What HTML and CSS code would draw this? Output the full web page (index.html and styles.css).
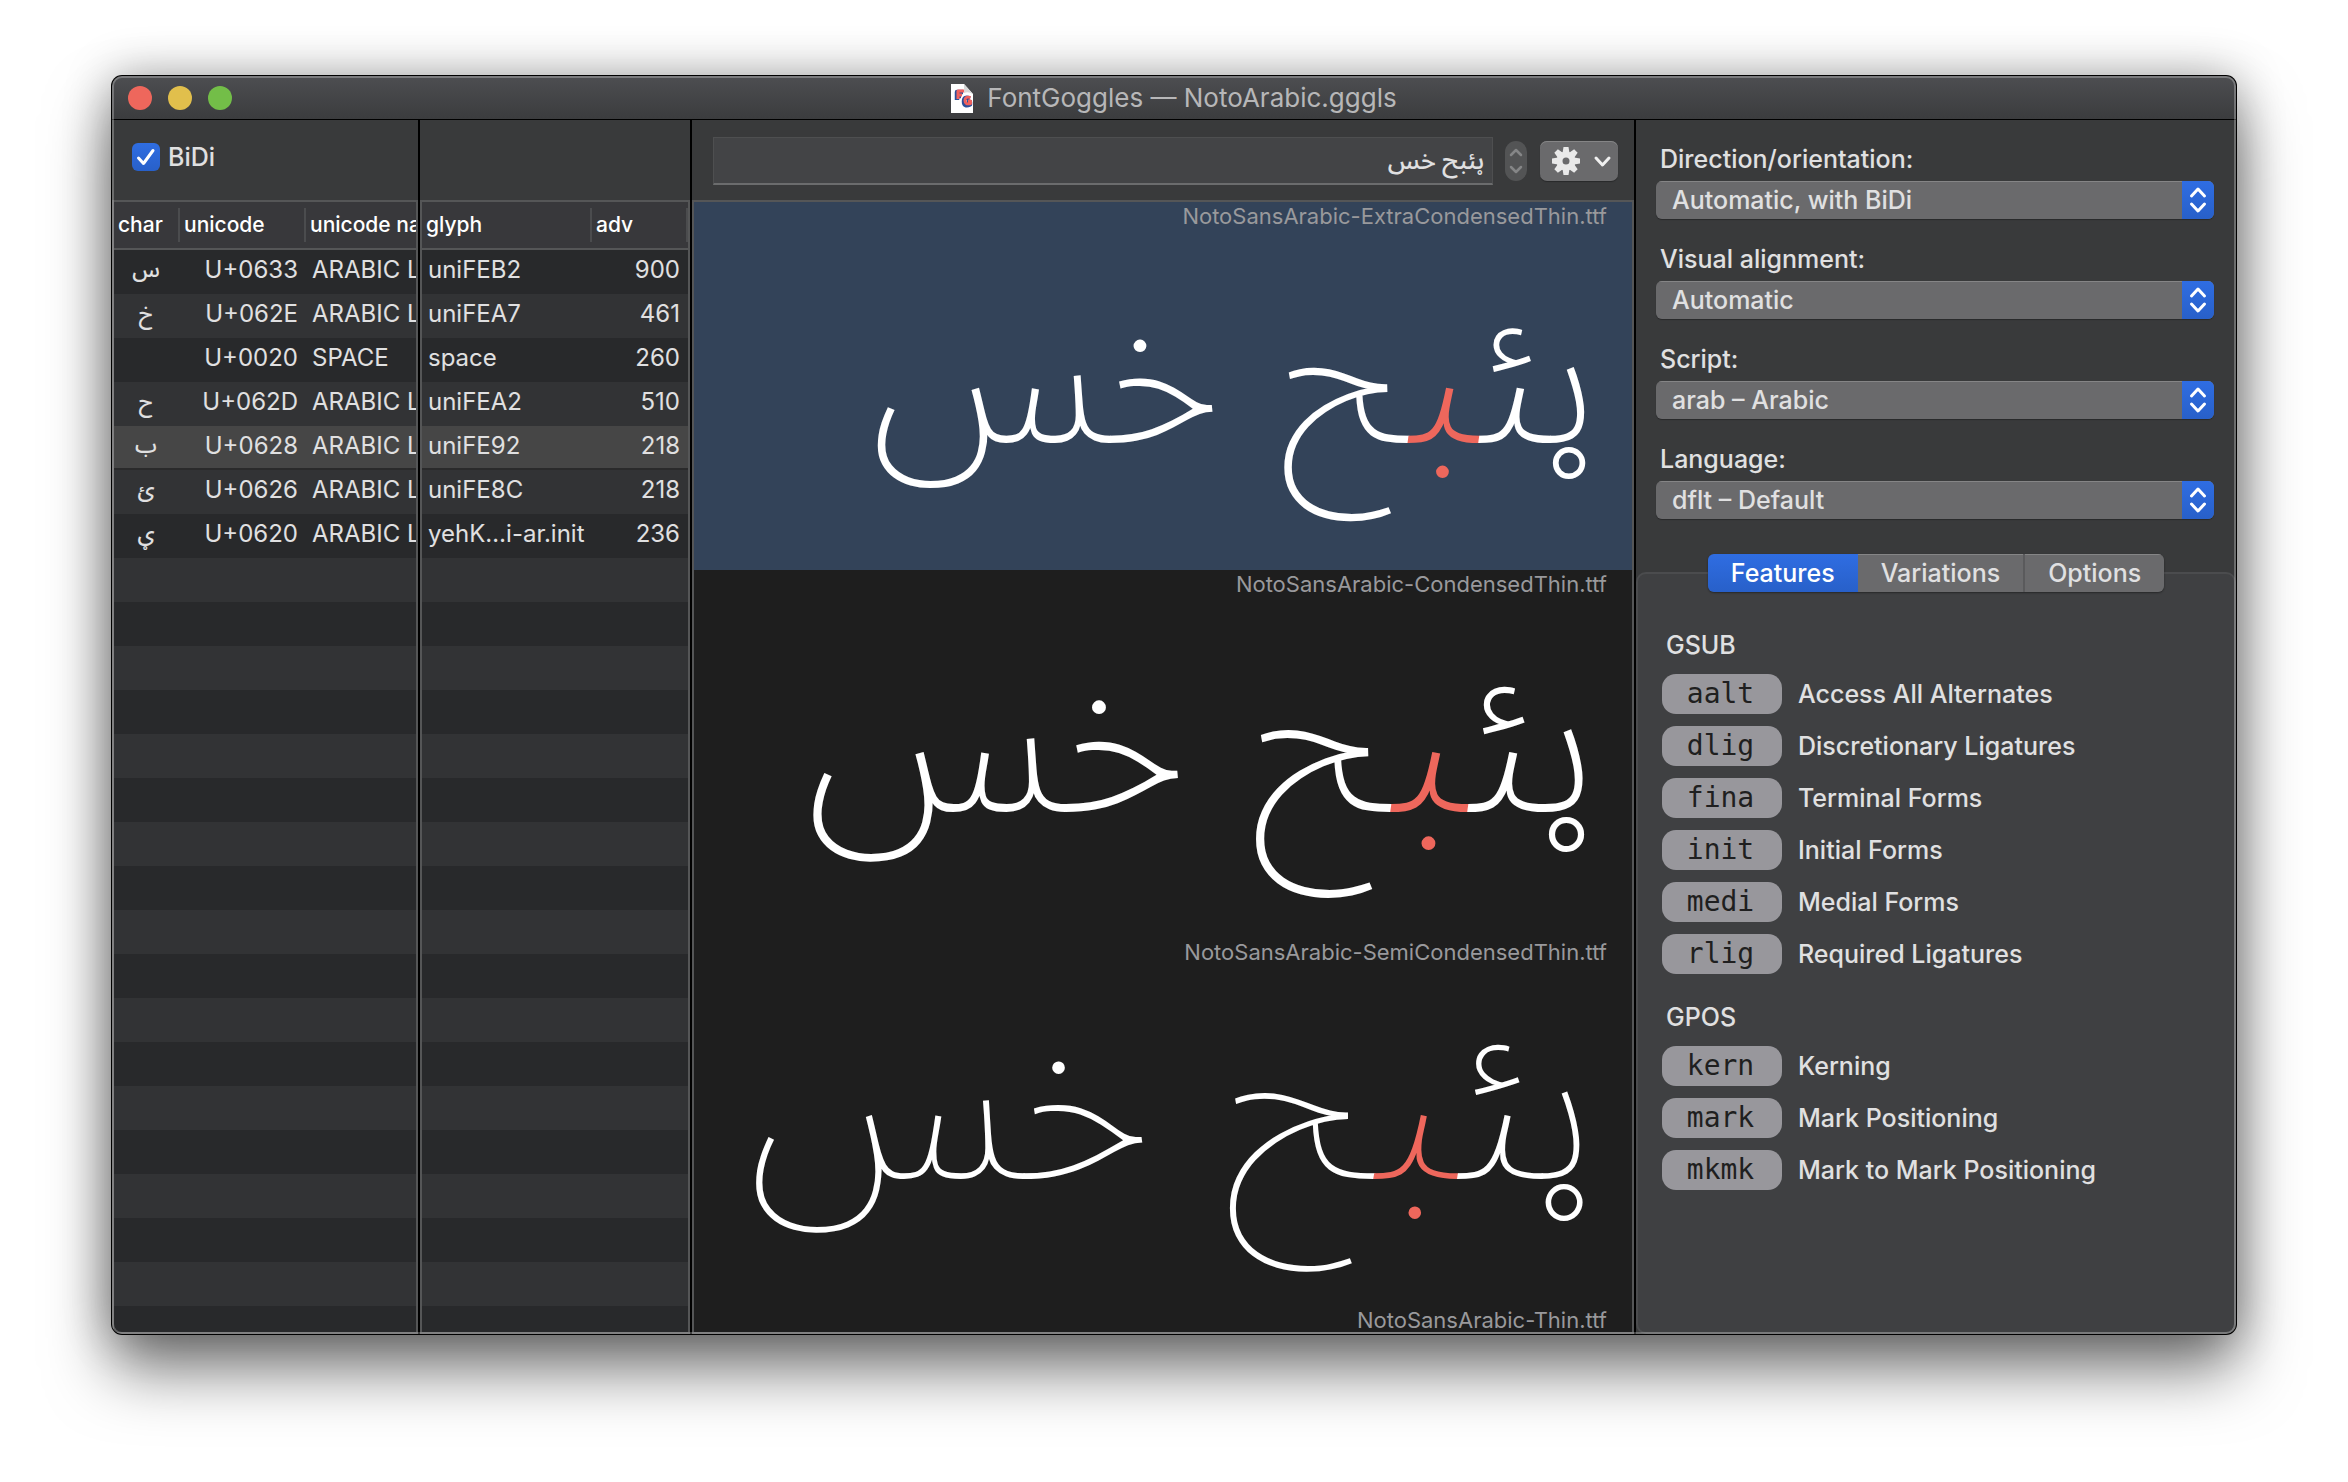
FILE: index.html
```html
<!DOCTYPE html>
<html lang="en">
<head>
<meta charset="utf-8">
<meta name="viewport" content="width=device-width, initial-scale=1">
<title>FontGoggles — NotoArabic.gggls</title>
<link rel="stylesheet" href="styles.css">
</head>
<body>
<div class="window">
  <header class="titlebar">
    <div class="lights">
      <button class="light light-close" aria-label="Close"></button>
      <button class="light light-minimize" aria-label="Minimize"></button>
      <button class="light light-zoom" aria-label="Zoom"></button>
    </div>
    <h1 class="title">
      <svg class="doc-icon" width="22" height="29" viewBox="0 0 22 29" aria-hidden="true">
        <path d="M0 0H13L22 10V29H0Z" fill="#fff"/>
        <path d="M13 0L22 10Q17 7 13 9Z" fill="#d8d8d8"/>
        <g fill="none" stroke-linejoin="round">
          <path d="M6 16V8H12M6 12H10M19 14.500Q13 12 13 17.500T19 20.500V18H16" stroke="#2c4f9a" stroke-width="4.500"/>
          <path d="M7 15V7H13M7 11H11M19.500 13.500Q14 12 14 16.500T19.500 19.500V17H17" stroke="#f0605c" stroke-width="3"/>
        </g>
      </svg>
      <span>FontGoggles — NotoArabic.gggls</span>
    </h1>
  </header>

  <main class="panes">
    <section class="pane">
      <div class="toolbar">
        <label class="check"><input type="checkbox" checked><svg width="28" height="28" viewBox="0 0 28 28" aria-hidden="true"><path d="M6.500 15l5 5.500L21 7.500" fill="none" stroke="#fff" stroke-width="3" stroke-linecap="round" stroke-linejoin="round"/></svg><span>BiDi</span></label>
      </div>
      <div class="list">
        <table class="grid chars">
          <colgroup><col class="c-char"><col class="c-code"><col></colgroup>
          <thead><tr><th>char</th><th>unicode</th><th>unicode na</th></tr></thead>
          <tbody>
            <tr><td lang="ar">س</td><td>U+0633</td><td>ARABIC L</td></tr>
            <tr><td lang="ar">خ</td><td>U+062E</td><td>ARABIC L</td></tr>
            <tr><td lang="ar"></td><td>U+0020</td><td>SPACE</td></tr>
            <tr><td lang="ar">ح</td><td>U+062D</td><td>ARABIC L</td></tr>
            <tr class="selected"><td lang="ar">ب</td><td>U+0628</td><td>ARABIC L</td></tr>
            <tr><td lang="ar">ئ</td><td>U+0626</td><td>ARABIC L</td></tr>
            <tr><td lang="ar">ؠ</td><td>U+0620</td><td>ARABIC L</td></tr>
          </tbody>
        </table>
      </div>
    </section>

    <section class="pane">
      <div class="toolbar"></div>
      <div class="list">
        <table class="grid glyphs">
          <colgroup><col class="c-glyph"><col></colgroup>
          <thead><tr><th>glyph</th><th>adv</th></tr></thead>
          <tbody>
            <tr><td>uniFEB2</td><td>900</td></tr>
            <tr><td>uniFEA7</td><td>461</td></tr>
            <tr><td>space</td><td>260</td></tr>
            <tr><td>uniFEA2</td><td>510</td></tr>
            <tr class="selected"><td>uniFE92</td><td>218</td></tr>
            <tr><td>uniFE8C</td><td>218</td></tr>
            <tr><td>yehK…i-ar.init</td><td>236</td></tr>
          </tbody>
        </table>
      </div>
    </section>

    <section class="pane">
      <div class="toolbar text-bar">
        <input class="text-input" type="text" dir="rtl" lang="ar" value="ؠئبح خس" aria-label="Sample text">
        <button class="stepper" aria-label="Previous or next text">
          <svg width="22" height="40" viewBox="0 0 22 40" fill="none" stroke="#858687" stroke-width="2.500" stroke-linecap="round" stroke-linejoin="round" aria-hidden="true"><path d="M6 14l5-5 5 5M6 26l5 5 5-5"/></svg>
        </button>
        <button class="gear-button" aria-label="Text settings">
          <svg width="78" height="40" viewBox="0 0 78 40" aria-hidden="true">
            <g transform="translate(26 20)" fill="#e9e9e9">
              <g id="teeth"><path d="M-2.500-14h5l1 6h-7zM-2.500 14h5l1-6h-7zM-14-2.500v5l6 1v-7zM14-2.500v5l-6 1v-7z"/></g>
              <use href="#teeth" transform="rotate(45)"/>
              <circle r="6.500" fill="none" stroke="#e9e9e9" stroke-width="6"/>
            </g>
            <path d="M56 17l6.500 7 6.500-7" fill="none" stroke="#f0f0f0" stroke-width="3" stroke-linecap="round" stroke-linejoin="round"/>
          </svg>
        </button>
      </div>
      <div class="list previews">
        <article class="preview current">
          <h2>NotoSansArabic-ExtraCondensedThin.ttf</h2>
          <p class="sample sample-small" dir="rtl" lang="ar">ؠئ<mark>ب</mark>ح خس</p>
        </article>
        <article class="preview">
          <h2>NotoSansArabic-CondensedThin.ttf</h2>
          <p class="sample sample-medium" dir="rtl" lang="ar">ؠئ<mark>ب</mark>ح خس</p>
        </article>
        <article class="preview">
          <h2>NotoSansArabic-SemiCondensedThin.ttf</h2>
          <p class="sample sample-large" dir="rtl" lang="ar">ؠئ<mark>ب</mark>ح خس</p>
        </article>
        <article class="preview">
          <h2>NotoSansArabic-Thin.ttf</h2>
        </article>
      </div>
    </section>

    <aside class="pane">
      <div class="settings">
        <div class="field">
          <label for="direction">Direction/orientation:</label>
          <div class="select"><select id="direction"><option>Automatic, with BiDi</option></select><svg width="32" height="38" viewBox="0 0 32 38" aria-hidden="true"><path d="M9.500 15L16 8l6.500 7M9.500 23l6.500 7 6.500-7"/></svg></div>
        </div>
        <div class="field">
          <label for="alignment">Visual alignment:</label>
          <div class="select"><select id="alignment"><option>Automatic</option></select><svg width="32" height="38" viewBox="0 0 32 38" aria-hidden="true"><path d="M9.500 15L16 8l6.500 7M9.500 23l6.500 7 6.500-7"/></svg></div>
        </div>
        <div class="field">
          <label for="script">Script:</label>
          <div class="select"><select id="script"><option>arab – Arabic</option></select><svg width="32" height="38" viewBox="0 0 32 38" aria-hidden="true"><path d="M9.500 15L16 8l6.500 7M9.500 23l6.500 7 6.500-7"/></svg></div>
        </div>
        <div class="field">
          <label for="language">Language:</label>
          <div class="select"><select id="language"><option>dflt – Default</option></select><svg width="32" height="38" viewBox="0 0 32 38" aria-hidden="true"><path d="M9.500 15L16 8l6.500 7M9.500 23l6.500 7 6.500-7"/></svg></div>
        </div>
      </div>
      <div class="tabs" role="tablist">
        <button class="tab active" role="tab" aria-selected="true">Features</button>
        <button class="tab" role="tab" aria-selected="false">Variations</button>
        <button class="tab" role="tab" aria-selected="false">Options</button>
      </div>
      <div class="tab-panel" role="tabpanel">
        <section class="features">
          <h3>GSUB</h3>
          <div class="feature"><button id="aalt" class="tag">aalt</button><label for="aalt">Access All Alternates</label></div>
          <div class="feature"><button id="dlig" class="tag">dlig</button><label for="dlig">Discretionary Ligatures</label></div>
          <div class="feature"><button id="fina" class="tag">fina</button><label for="fina">Terminal Forms</label></div>
          <div class="feature"><button id="init" class="tag">init</button><label for="init">Initial Forms</label></div>
          <div class="feature"><button id="medi" class="tag">medi</button><label for="medi">Medial Forms</label></div>
          <div class="feature"><button id="rlig" class="tag">rlig</button><label for="rlig">Required Ligatures</label></div>
        </section>
        <section class="features">
          <h3>GPOS</h3>
          <div class="feature"><button id="kern" class="tag">kern</button><label for="kern">Kerning</label></div>
          <div class="feature"><button id="mark" class="tag">mark</button><label for="mark">Mark Positioning</label></div>
          <div class="feature"><button id="mkmk" class="tag">mkmk</button><label for="mkmk">Mark to Mark Positioning</label></div>
        </section>
      </div>
    </aside>
  </main>
</div>
</body>
</html>
```
FILE: styles.css
```css
* { box-sizing: border-box; }

:root {
  --ui: Inter, "Liberation Sans", sans-serif;
  --arabic: "Noto Sans Arabic", "DejaVu Sans", sans-serif;
  --text: #e0e0e1;
  --rule: #555657;
  --blue-top: #2f6de2;
  --blue-bottom: #2860c9;
}

body {
  margin: 0;
  min-height: 100vh;
  padding: 76px 112px 148px;
  display: flex;
  background: #fff;
  color: var(--text);
  font: 450 25px/30px var(--ui);
}

button, input, select {
  margin: 0;
  padding: 0;
  border: 0;
  font: inherit;
  color: inherit;
}

h1, h2, h3, p { margin: 0; font: inherit; }

/* Window frame */
.window {
  position: relative;
  flex: 1;
  min-width: 0;
  display: flex;
  flex-direction: column;
  border-radius: 10px;
  background: #000;
  box-shadow:
    0 0 0 1px #000,
    0 36px 64px rgba(0, 0, 0, .52),
    0 0 48px rgba(0, 0, 0, .32);
}

.window::after {
  content: "";
  position: absolute;
  inset: 0;
  border: 2px solid rgba(255, 255, 255, .26);
  border-radius: 10px;
  pointer-events: none;
}

.titlebar {
  display: grid;
  grid-template-columns: 1fr auto 1fr;
  align-items: center;
  height: 44px;
  padding: 0 16px;
  border-bottom: 1px solid #000;
  border-radius: 10px 10px 0 0;
  background: linear-gradient(#4d4e51, #3b3c3e);
}

.lights { display: flex; gap: 16px; }
.light { width: 24px; height: 24px; border-radius: 50%; }
.light-close { background: #ee675c; }
.light-minimize { background: #e1bf4c; }
.light-zoom { background: #73be48; }

.title {
  display: flex;
  align-items: center;
  gap: 14px;
  font-size: 26px;
  font-weight: 400;
  line-height: 32px;
  padding-top: 1px;
  color: #b7b7b8;
}

.panes {
  flex: 1;
  display: grid;
  grid-template-columns: 306px 270px minmax(0, 1fr) 600px;
  gap: 2px;
}

.pane {
  display: flex;
  flex-direction: column;
  min-width: 0;
  background: #393a3b;
}

.pane:first-child { border-bottom-left-radius: 10px; overflow: hidden; }
.pane:last-child { border-bottom-right-radius: 10px; overflow: hidden; }

.toolbar { height: 80px; padding: 22px 20px; }

/* BiDi tick box */
.check { display: inline-grid; grid-template-columns: 28px auto; column-gap: 8px; align-items: center; }
.check input, .check svg { grid-area: 1 / 1; width: 28px; height: 28px; }
.check input {
  appearance: none;
  border-radius: 6px;
  background: linear-gradient(var(--blue-top), var(--blue-bottom));
}
.check svg { pointer-events: none; }

/* Character and glyph lists */
.list {
  flex: 1;
  min-width: 0;
  overflow: hidden;
  border: 2px solid var(--rule);
  background: repeating-linear-gradient(#28292b 0 44px, #323335 44px 88px) 0 48px;
}

.grid { width: 100%; table-layout: fixed; border-collapse: separate; border-spacing: 0; }
.c-char { width: 66px; }
.c-code { width: 126px; }
.c-glyph { width: 170px; }

.grid th, .grid td { overflow: hidden; white-space: nowrap; text-align: left; }

.grid th {
  height: 48px;
  padding: 0 0 0 4px;
  border-bottom: 2px solid var(--rule);
  background: linear-gradient(#4b4c4e, #4b4c4e) no-repeat right 6px / 2px 34px #38383b;
  font-size: 21px;
  font-weight: 500;
  line-height: 46px;
  color: #fff;
}
.chars th:last-child { background: #38383b; }

.grid td {
  height: 44px;
  padding: 0 8px 4px 6px;
  font-size: 24px;
  font-weight: 400;
  line-height: 40px;
}
.chars td:nth-child(1) { padding: 0 2px 4px 0; font-family: var(--arabic); font-size: 22px; font-weight: 500; text-align: center; }
.chars td:nth-child(2) { text-align: right; }
.chars td:nth-child(3) { padding-right: 0; }
.glyphs td:nth-child(2) { text-align: right; }

.selected td { background: linear-gradient(#464646 42px, #2a2a2b 42px); }

/* Sample text bar */
.text-bar { display: flex; align-items: center; padding: 2px 16px 0 21px; }

.text-input {
  flex: 1;
  min-width: 0;
  height: 48px;
  padding: 0 8px;
  border: 1px solid #4e4f50;
  border-bottom: 2px solid #6b6c6d;
  background: #434446;
  font: 500 25px/44px var(--arabic);
}

.stepper {
  width: 22px;
  height: 40px;
  margin: 0 13px 0 12px;
  border-radius: 11px;
  background: #535455;
}

.gear-button {
  width: 78px;
  height: 40px;
  border-radius: 7px;
  background: #6a6a6c;
  box-shadow: inset 0 1px #858586, 0 1px 1px rgba(0, 0, 0, .3);
}

.text-bar svg { display: block; }

/* Font previews */
.previews {
  display: flex;
  flex-direction: column;
  flex: 1 1 0;
  min-height: 0;
  background: #1e1e1e;
}

.preview { flex: none; overflow: hidden; }
.preview.current { background: #334359; }

.preview h2 {
  padding-right: 25px;
  font-size: 22px;
  font-weight: 400;
  line-height: 28px;
  text-align: right;
  color: #99999c;
}

.sample {
  height: 340px;
  padding-right: 32px;
  font-family: var(--arabic);
  white-space: nowrap;
  color: #fff;
}
.sample mark { background: none; color: #ee675c; }
.sample-small { font-size: 202px; font-weight: 190; line-height: 296px; }
.sample-medium { font-size: 220px; font-weight: 160; line-height: 286px; }
.sample-large { font-size: 238px; font-weight: 130; line-height: 274px; }

/* Settings sidebar */
.settings {
  display: flex;
  flex-direction: column;
  gap: 25px;
  padding: 24px 22px 35px 20px;
}

.field { display: flex; flex-direction: column; gap: 7px; }
.field label { padding-left: 4px; }

.select {
  display: grid;
  border-radius: 6px;
  overflow: hidden;
  box-shadow: 0 1px 1px rgba(0, 0, 0, .3);
}
.select select {
  grid-area: 1 / 1;
  appearance: none;
  height: 38px;
  padding: 0 40px 0 16px;
  background: #6a6a6c;
  box-shadow: inset 0 1px #858586;
}
.select svg {
  grid-area: 1 / 1;
  justify-self: end;
  background: linear-gradient(var(--blue-top), var(--blue-bottom));
  fill: none;
  stroke: #fff;
  stroke-width: 3;
  stroke-linecap: round;
  stroke-linejoin: round;
  pointer-events: none;
}

/* Tabs */
.tabs {
  position: relative;
  z-index: 1;
  align-self: center;
  display: flex;
  margin-bottom: -20px;
  border-radius: 6px;
  overflow: hidden;
  box-shadow: 0 1px 2px rgba(0, 0, 0, .4);
}
.tab {
  height: 38px;
  padding: 0 23px;
  background: #6a6a6c;
  box-shadow: inset 0 1px #858586;
}
.tab + .tab + .tab { border-left: 2px solid #5a5a5c; }
.tab.active { background: linear-gradient(var(--blue-top), var(--blue-bottom)); box-shadow: none; color: #fff; }

.tab-panel {
  flex: 1;
  display: flex;
  flex-direction: column;
  gap: 28px;
  padding: 56px 24px 24px;
  border: 2px solid #4b4c4e;
  border-radius: 10px;
  background: #3f4042;
}

.features { display: flex; flex-direction: column; gap: 12px; }
.features h3 { padding-left: 4px; margin-bottom: 2px; }
.feature { display: flex; align-items: center; gap: 16px; }

.tag {
  width: 120px;
  height: 40px;
  padding-right: 3px;
  border-radius: 14px;
  background: #98979c;
  color: #1f1f20;
  font: 28px/40px "DejaVu Sans Mono", monospace;
}
```
